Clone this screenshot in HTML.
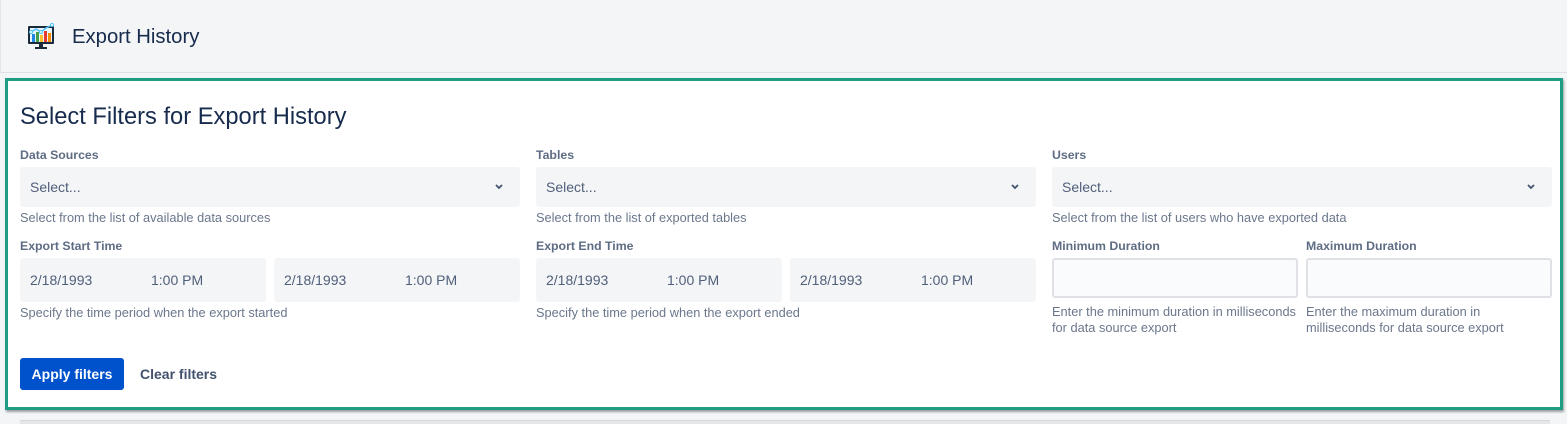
<!DOCTYPE html>
<html><head><style>
*{box-sizing:border-box;margin:0;padding:0}
body{width:1567px;height:424px;background:#f4f5f7;font-family:"Liberation Sans",Arial,sans-serif;position:relative;overflow:hidden;color:#172b4d}
.a{position:absolute}
.top{left:0;top:0;width:1567px;height:73px;border-bottom:1px solid #dfe1e6;border-left:1px solid #e4e5e8}
.title{left:72px;top:26px;font-size:20.3px;color:#172b4d}
.box{left:5px;top:78px;width:1558px;height:332px;background:#fff;border:3px solid #1f9d84;box-shadow:1px 2px 2px rgba(0,0,0,.35)}
h1{position:absolute;left:20px;top:104px;font-size:23.7px;font-weight:normal;color:#172b4d}
.lbl{font-size:12.3px;font-weight:bold;color:#5e6c84}
.help{font-size:12.8px;color:#6b778c;line-height:12px}
.sel{height:40px;background:#f4f5f7;border-radius:3px;font-size:14px;color:#505f79;padding:12px 10px}
.sel svg{position:absolute;right:16px;top:16px}
.dt{height:44px;width:246px;background:#f4f5f7;border-radius:3px;font-size:14px;color:#505f79;padding:14px 10px}
.dt span{position:absolute;left:131px}
.inp{height:40px;width:246px;background:#fafbfc;border:2px solid #dfe1e6;border-radius:3px}
.btn{left:20px;top:358px;width:104px;height:32px;background:#0052cc;border-radius:3px;color:#fff;font-size:14px;font-weight:bold;text-align:center;line-height:32px}
.clr{left:140px;top:366px;font-size:14px;font-weight:bold;color:#42526e}
</style></head><body>
<div class="a top"></div>
<svg class="a" style="left:27px;top:23px" width="30" height="28" viewBox="0 0 30 28">
<rect x="1" y="3" width="26" height="18" rx="1" fill="#1a2a3a"/>
<rect x="3" y="5" width="22" height="14" fill="#e8f4fb"/>
<rect x="5" y="11" width="3" height="8" fill="#1e88e5"/><rect x="9" y="9" width="3" height="10" fill="#43a047"/><rect x="13" y="12" width="3" height="7" fill="#fbc02d"/><rect x="17" y="8" width="3" height="11" fill="#e53935"/><rect x="21" y="10" width="3" height="9" fill="#fb8c00"/>
<polyline points="4,9 9,6 14,9 19,5 25,2" fill="none" stroke="#4fc3f7" stroke-width="1.5"/>
<circle cx="4" cy="9" r="1.5" fill="#fff" stroke="#4fc3f7"/><circle cx="14" cy="9" r="1.5" fill="#fff" stroke="#4fc3f7"/><circle cx="25" cy="2" r="1.5" fill="#fff" stroke="#4fc3f7"/>
<rect x="12" y="21" width="4" height="3" fill="#1a2a3a"/><rect x="8" y="24" width="12" height="2" fill="#1a2a3a"/>
</svg>
<div class="a title">Export History</div>
<div class="a box"></div>
<h1>Select Filters for Export History</h1>

<div class="a lbl" style="left:20px;top:148px">Data Sources</div>
<div class="a sel" style="left:20px;top:167px;width:500px">Select...<svg width="10" height="8" viewBox="0 0 10 8"><path d="M2 2l3 3 3-3" fill="none" stroke="#42526e" stroke-width="1.8"/></svg></div>
<div class="a help" style="left:20px;top:212px">Select from the list of available data sources</div>

<div class="a lbl" style="left:536px;top:148px">Tables</div>
<div class="a sel" style="left:536px;top:167px;width:500px">Select...<svg width="10" height="8" viewBox="0 0 10 8"><path d="M2 2l3 3 3-3" fill="none" stroke="#42526e" stroke-width="1.8"/></svg></div>
<div class="a help" style="left:536px;top:212px">Select from the list of exported tables</div>

<div class="a lbl" style="left:1052px;top:148px">Users</div>
<div class="a sel" style="left:1052px;top:167px;width:500px">Select...<svg width="10" height="8" viewBox="0 0 10 8"><path d="M2 2l3 3 3-3" fill="none" stroke="#42526e" stroke-width="1.8"/></svg></div>
<div class="a help" style="left:1052px;top:212px">Select from the list of users who have exported data</div>

<div class="a lbl" style="left:20px;top:239px">Export Start Time</div>
<div class="a dt" style="left:20px;top:258px">2/18/1993<span>1:00 PM</span></div>
<div class="a dt" style="left:274px;top:258px">2/18/1993<span>1:00 PM</span></div>
<div class="a help" style="left:20px;top:307px">Specify the time period when the export started</div>

<div class="a lbl" style="left:536px;top:239px">Export End Time</div>
<div class="a dt" style="left:536px;top:258px">2/18/1993<span>1:00 PM</span></div>
<div class="a dt" style="left:790px;top:258px">2/18/1993<span>1:00 PM</span></div>
<div class="a help" style="left:536px;top:307px">Specify the time period when the export ended</div>

<div class="a lbl" style="left:1052px;top:239px">Minimum Duration</div>
<div class="a inp" style="left:1052px;top:258px"></div>
<div class="a help" style="left:1052px;top:304px;width:250px;line-height:16px">Enter the minimum duration in milliseconds for data source export</div>
<div class="a lbl" style="left:1306px;top:239px">Maximum Duration</div>
<div class="a inp" style="left:1306px;top:258px"></div>
<div class="a help" style="left:1306px;top:304px;width:210px;line-height:16px">Enter the maximum duration in milliseconds for data source export</div>

<div class="a btn">Apply filters</div>
<div class="a clr">Clear filters</div>
<div class="a" style="left:20px;top:420px;width:1530px;height:4px;background:#e4e6ea;border-top:1px solid #d5d8dd"></div>
</body></html>
